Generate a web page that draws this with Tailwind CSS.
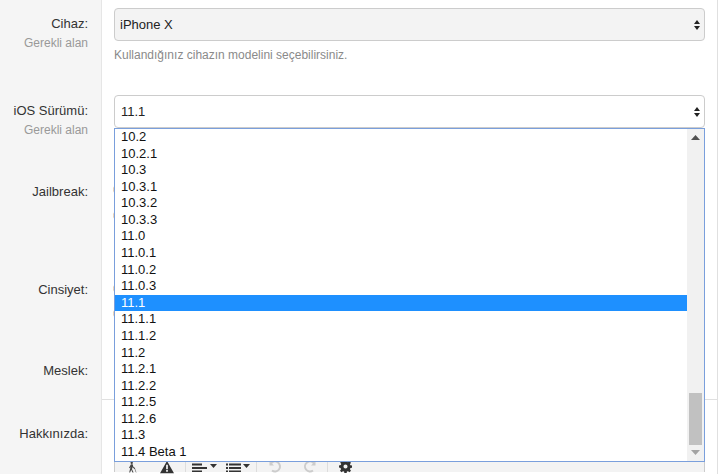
<!DOCTYPE html>
<html lang="tr">
<head>
    <meta charset="UTF-8">
    <title>Profil</title>
    <script src="https://cdn.jsdelivr.net/npm/@tailwindcss/browser@4"></script>
</head>
<body class="bg-white font-['Liberation_Sans',Arial,sans-serif] text-[13px] text-[#333]">
    <div class="flex h-[474px] w-[719px] overflow-hidden">
        <!-- etiketler -->
        <div class="flex w-[102px] flex-col items-end border-r border-[#e6e6e6] bg-[#f5f5f5] pr-[13px] text-right leading-[20px] text-[#333]">
            <div class="mt-[14px]">Cihaz:</div>
            <div class="mt-[1px] text-[12px] leading-[17px] text-[#999]">Gerekli alan</div>
            <div class="mt-[49px]">iOS Sürümü:</div>
            <div class="mt-[1px] text-[12px] leading-[17px] text-[#999]">Gerekli alan</div>
            <div class="mt-[43px]">Jailbreak:</div>
            <div class="mt-[78px]">Cinsiyet:</div>
            <div class="mt-[61px]">Meslek:</div>
            <div class="mt-[43px]">Hakkınızda:</div>
        </div>

        <!-- alanlar -->
        <div class="relative w-[616px] border-r border-[#e0e0e0]">
            <div class="ml-[12px] w-[591px] pt-[8px]">
                <div class="flex h-[33px] items-center justify-between rounded-[4px] border border-[#ccc] bg-[#f3f3f3] pl-[5px] pr-[4px] text-[#222]">
                    <span>iPhone X</span>
                    <svg width="6" height="10" viewBox="0 0 6 10" fill="#222"><path d="M3 0 6 4H0zM0 6h6L3 10z"/></svg>
                </div>
                <p class="mt-[6px] text-[12px] leading-[17px] text-[#8a8a8a]">Kullandığınız cihazın modelini seçebilirsiniz.</p>
                <div class="mt-[31px] flex h-[33px] items-center justify-between rounded-[4px] border border-[#ccc] bg-white pl-[6px] pr-[4px] text-[#222]">
                    <span>11.1</span>
                    <svg width="6" height="10" viewBox="0 0 6 10" fill="#222"><path d="M3 0 6 4H0zM0 6h6L3 10z"/></svg>
                </div>
                <!-- listenin arkasında kalan radio kenarları -->
                <div class="-ml-[1px] mt-[55px] h-[13px] w-[13px] rounded-full border border-[#e3c8a8]"></div>
                <div class="-ml-[1px] mt-[13px] h-[13px] w-[13px] rounded-full border border-[#e3c8a8]"></div>
                <div class="-ml-[1px] mt-[60px] h-[13px] w-[13px] rounded-full border border-[#e3c8a8]"></div>
                <div class="-ml-[1px] mt-[12px] h-[13px] w-[13px] rounded-full border border-[#e3c8a8]"></div>
            </div>
            <div class="mt-[79px] h-[60px] border-t border-[#e0e0e0]"></div>

            <!-- editör araç çubuğu -->
            <div class="ml-[12px] flex h-[13px] w-[591px] items-start border-x border-[#ccc] bg-[#f3f3f3] text-[#333]">
                <div class="flex h-[13px] w-[71px] items-start gap-[22px] border-r border-[#ddd] pl-[12px] pt-px">
                    <svg width="11" height="14" viewBox="0 0 14 14" fill="#444"><circle cx="6" cy="1.6" r="1.5"/><path d="M5 3.500h2.200l1 3.500 2.300 1.500-.6.900L7.400 8l-.4-1-.6 3 2 4H7l-1.700-3.400L4 14H2.800l1.700-7-1 1.500-.9-.6z"/><path d="M9.600 7.500 12 14h-.6L9.100 8z"/></svg>
                    <svg width="14" height="14" viewBox="0 0 16 14" fill="#333"><path fill-rule="evenodd" d="M8 0 16 14H0zM7 4.500V9.500h2V4.500zM7 10.500v2h2v-2z"/></svg>
                </div>
                <div class="flex h-[13px] w-[71px] items-start gap-[9px] border-r border-[#ddd] pl-[6px] pt-px">
                    <svg width="25" height="12" viewBox="0 0 25 12" fill="#333"><path d="M0 0h15v2H0zM0 3.500h10v2H0zM0 7h15v2H0zM0 10.500h10V12H0zM18 4h7l-3.500 4z"/></svg>
                    <svg width="24" height="12" viewBox="0 0 24 12" fill="#333"><path d="M0 0h2v2H0zM3 0h12v2H3zM0 3.500h2v2H0zM3 3.500h12v2H3zM0 7h2v2H0zM3 7h12v2H3zM0 10.500h2V12H0zM3 10.500h12V12H3zM17 4h7l-3.500 4z"/></svg>
                </div>
                <div class="flex h-[13px] w-[71px] items-start gap-[21px] border-r border-[#ddd] pl-[11px] pt-px">
                    <svg width="14" height="14" viewBox="0 0 14 14" fill="none" stroke="#ccc" stroke-width="2"><path d="M3 3.500A5 5 0 1 1 4 10.500"/><path d="M1.500 1v4.500H6" fill="#ccc" stroke="none"/></svg>
                    <svg width="14" height="14" viewBox="0 0 14 14" fill="none" stroke="#ccc" stroke-width="2"><path d="M11 3.500A5 5 0 1 0 10 10.500"/><path d="M12.500 1v4.500H8" fill="#ccc" stroke="none"/></svg>
                </div>
                <div class="pl-[11px] pt-px">
                    <svg width="13" height="13" viewBox="0 0 14 14" fill="#333"><path fill-rule="evenodd" d="M5.800 0h2.400l.3 1.900 1.200.5 1.600-1.100 1.600 1.600-1.100 1.600.5 1.200 1.900.3v2.400l-1.900.3-.5 1.200 1.100 1.600-1.600 1.600-1.600-1.100-1.200.5-.3 1.900H5.800l-.3-1.900-1.200-.5-1.600 1.100-1.600-1.600 1.100-1.600-.5-1.200L0 8.200V5.800l1.900-.3.5-1.200-1.100-1.600 1.600-1.600 1.600 1.100 1.200-.5zM7 4.800a2.200 2.200 0 1 0 0 4.400 2.200 2.200 0 0 0 0-4.400z"/></svg>
                </div>
            </div>

            <!-- açık sürüm listesi -->
            <div class="absolute left-[12px] top-[128px] flex h-[334px] w-[591px] border border-[#7a9fdc] bg-white text-[13px] leading-[16.58px] text-[#111]">
                <ul class="flex-1 pl-0">
                    <li class="h-[16.58px] pl-[6px]">10.2</li>
                    <li class="h-[16.58px] pl-[6px]">10.2.1</li>
                    <li class="h-[16.58px] pl-[6px]">10.3</li>
                    <li class="h-[16.58px] pl-[6px]">10.3.1</li>
                    <li class="h-[16.58px] pl-[6px]">10.3.2</li>
                    <li class="h-[16.58px] pl-[6px]">10.3.3</li>
                    <li class="h-[16.58px] pl-[6px]">11.0</li>
                    <li class="h-[16.58px] pl-[6px]">11.0.1</li>
                    <li class="h-[16.58px] pl-[6px]">11.0.2</li>
                    <li class="h-[16.58px] pl-[6px]">11.0.3</li>
                    <li class="h-[16.58px] bg-[#1e90ff] pl-[6px] text-white">11.1</li>
                    <li class="h-[16.58px] pl-[6px]">11.1.1</li>
                    <li class="h-[16.58px] pl-[6px]">11.1.2</li>
                    <li class="h-[16.58px] pl-[6px]">11.2</li>
                    <li class="h-[16.58px] pl-[6px]">11.2.1</li>
                    <li class="h-[16.58px] pl-[6px]">11.2.2</li>
                    <li class="h-[16.58px] pl-[6px]">11.2.5</li>
                    <li class="h-[16.58px] pl-[6px]">11.2.6</li>
                    <li class="h-[16.58px] pl-[6px]">11.3</li>
                    <li class="h-[16.58px] pl-[6px]">11.4 Beta 1</li>
                </ul>
                <!-- scrollbar -->
                <div class="flex w-[17px] flex-col items-center justify-between bg-[#f1f1f1] px-[1px] py-[6px]">
                    <svg width="9" height="5" viewBox="0 0 9 5" fill="#505050"><path d="M4.500 0 9 5H0z"/></svg>
                    <div class="mb-[5px] mt-auto h-[52px] w-[13px] bg-[#c1c1c1]"></div>
                    <svg width="9" height="5" viewBox="0 0 9 5" fill="#a3a3a3"><path d="M0 0h9L4.500 5z"/></svg>
                </div>
            </div>
        </div>
    </div>
</body>
</html>
